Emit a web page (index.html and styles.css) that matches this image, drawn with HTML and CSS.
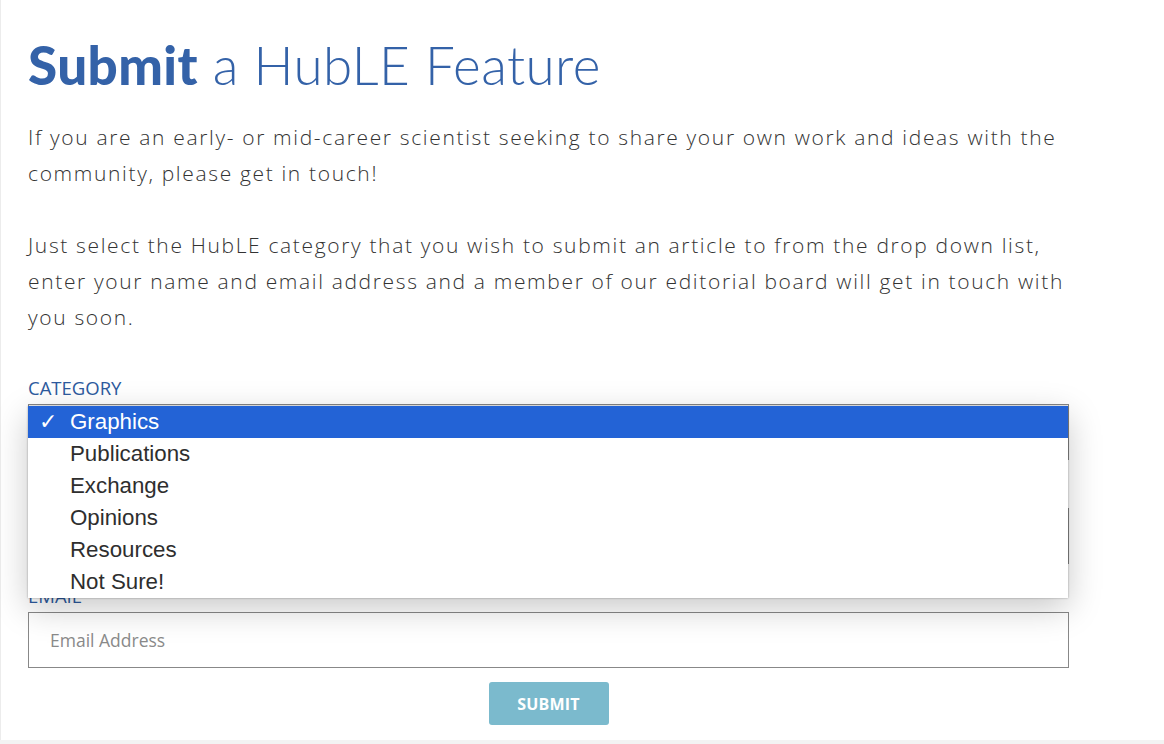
FILE: index.html
```html
<!DOCTYPE html>
<html lang="en">
<head>
<meta charset="utf-8">
<title>Submit a HubLE Feature</title>
<link rel="stylesheet" href="styles.css">
</head>
<body>
<main class="page">
  <h1 class="title"><strong>Submit</strong> a HubLE Feature</h1>
  <p class="lead">If you are an early- or mid-career scientist seeking to share your own work and ideas with the community, please get in touch!</p>
  <p class="lead">Just select the HubLE category that you wish to submit an article to from the drop down list, enter your name and email address and a member of our editorial board will get in touch with you soon.</p>
  <form class="form">
    <div class="field">
      <label class="label">CATEGORY</label>
      <div class="select">Graphics</div>
      <ul class="dropdown">
        <li class="option selected"><span class="check">✓</span>Graphics</li>
        <li class="option">Publications</li>
        <li class="option">Exchange</li>
        <li class="option">Opinions</li>
        <li class="option">Resources</li>
        <li class="option">Not Sure!</li>
      </ul>
    </div>
    <div class="field">
      <label class="label">NAME</label>
      <div class="input"><span class="placeholder">Your Name</span></div>
    </div>
    <div class="field">
      <label class="label">EMAIL</label>
      <div class="input"><span class="placeholder">Email Address</span></div>
    </div>
    <div class="actions">
      <button type="button" class="submit">SUBMIT</button>
    </div>
  </form>
</main>
<div class="footer-strip"></div>
</body>
</html>
```

FILE: styles.css
```css
html, body {
  margin: 0;
  padding: 0;
  background: #ffffff;
}

body {
  width: 1164px;
  height: 744px;
  overflow: hidden;
  display: flex;
  flex-direction: column;
}

.page {
  flex: 1;
  border-left: 1px solid #ececec;
  padding: 30px 95px 0 27px;
  position: relative;
}

.title {
  margin: 0;
  font-family: "Lato", "Open Sans", sans-serif;
  font-weight: 300;
  font-size: 53px;
  line-height: 70px;
  color: #3462a8;
  letter-spacing: 0.4px;
}

.title strong {
  font-weight: 900;
}

.lead {
  margin: 19px 0 36px;
  font-family: "Open Sans", sans-serif;
  font-weight: 300;
  font-size: 21px;
  line-height: 36px;
  color: #333333;
  letter-spacing: 1.65px;
}

.lead + .lead {
  margin-top: 0;
  margin-bottom: 0;
}

.form {
  margin-top: 41px;
  width: 1041px;
}

.field {
  position: relative;
  margin-bottom: 20px;
}

.label {
  display: block;
  height: 24px;
  line-height: 24px;
  margin-bottom: 4px;
  font-family: "Open Sans", sans-serif;
  font-size: 18.5px;
  color: #2d5a9e;
}

.select,
.input {
  box-sizing: border-box;
  height: 56px;
  border: 1px solid #888888;
  display: flex;
  align-items: center;
  padding: 0 21px;
  font-family: "Open Sans", sans-serif;
  font-size: 17.5px;
  color: #333333;
  background: #ffffff;
}

.placeholder {
  color: #8a8a8a;
}

.dropdown {
  position: absolute;
  left: 0;
  top: 30px;
  width: 1040px;
  margin: 0;
  padding: 0;
  list-style: none;
  background: #ffffff;
  box-shadow: 0 10px 32px rgba(0, 0, 0, 0.22), 0 0 2px rgba(0, 0, 0, 0.35);
  z-index: 5;
}

.option {
  position: relative;
  height: 32px;
  line-height: 32px;
  padding-left: 42px;
  font-family: "Liberation Sans", Arial, sans-serif;
  font-size: 22.3px;
  color: #2e2e2e;
}

.option.selected {
  background: #2363d6;
  color: #ffffff;
}

.check {
  position: absolute;
  left: 11px;
  top: 0;
  font-family: "DejaVu Sans", sans-serif;
  font-weight: bold;
  font-size: 22px;
}

.actions {
  display: flex;
  justify-content: center;
  margin-top: -6px;
}

.submit {
  width: 120px;
  height: 43px;
  border: none;
  border-radius: 3px;
  background: #7bbacd;
  color: #ffffff;
  font-family: "Open Sans", sans-serif;
  font-weight: 700;
  font-size: 16px;
  letter-spacing: 0.2px;
  padding: 0;
}

.footer-strip {
  height: 4px;
  background: #f3f3f3;
}
```
